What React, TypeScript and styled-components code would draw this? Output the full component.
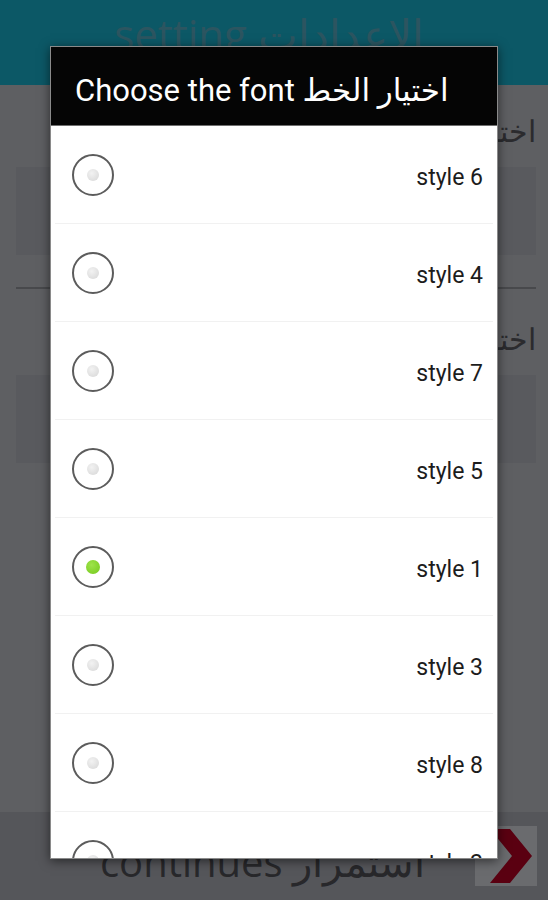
import React from 'react';
import styled, { createGlobalStyle } from 'styled-components';

const GlobalStyle = createGlobalStyle`
  html, body {
    margin: 0;
    padding: 0;
    background: #5e5f62;
  }
  body {
    font-family: Roboto, "Noto Sans", "DejaVu Sans", sans-serif;
  }
`;

const fonts = ['style 6', 'style 4', 'style 7', 'style 5', 'style 1', 'style 3', 'style 8', 'style 2'];
const selectedFont = 'style 1';

const App: React.FC = () => {
  return (
    <>
      <GlobalStyle />
      <Screen>
        <TopBar>
          <ScreenTitle>setting الإعدادات</ScreenTitle>
        </TopBar>

        <Content>
          <SectionLabel>اختر الخط</SectionLabel>
          <Field />
          <Divider />
          <SectionLabel>اختر الحجم</SectionLabel>
          <Field />
        </Content>

        <BottomBar>
          <ContinueText>continues استمرار</ContinueText>
          <NextButton>
            <svg width="56" height="58" viewBox="0 0 56 58">
              <path d="M12 2 L32 2 L54 29 L32 56 L12 56 L34 29 Z" fill="#5a0011" />
            </svg>
          </NextButton>
        </BottomBar>

        <Dialog>
          <DialogHeader>
            <DialogTitle>Choose the font اختيار الخط</DialogTitle>
          </DialogHeader>
          <OptionList>
            {fonts.map((font) => (
              <OptionRow key={font}>
                <Radio>
                  <RadioDot $checked={font === selectedFont} />
                </Radio>
                <OptionLabel>{font}</OptionLabel>
              </OptionRow>
            ))}
          </OptionList>
        </Dialog>
      </Screen>
    </>
  );
};

export default App;

const Screen = styled.div`
  position: relative;
  width: 548px;
  height: 900px;
  overflow: hidden;
  display: flex;
  flex-direction: column;
  background: #5e5f62;
`;

const TopBar = styled.div`
  height: 85px;
  background: #0c5866;
  display: flex;
  justify-content: center;
  align-items: flex-end;
  overflow: hidden;
`;

const ScreenTitle = styled.div`
  font-family: "Open Sans", "Noto Sans", sans-serif;
  font-size: 42px;
  line-height: 1;
  color: #2c5560;
  margin-bottom: 30px;
  margin-left: -10px;
`;

const Content = styled.div`
  flex: 1;
  display: flex;
  flex-direction: column;
  padding: 26px 12px 0 16px;
`;

const SectionLabel = styled.div`
  font-family: "Open Sans", "Noto Sans", sans-serif;
  font-size: 30px;
  line-height: 40px;
  color: #2b2b2e;
  direction: rtl;
  text-align: right;
  white-space: nowrap;
`;

const Field = styled.div`
  height: 88px;
  margin-top: 16px;
  background: #595a5e;
`;

const Divider = styled.div`
  height: 2px;
  margin: 32px 0 30px;
  background: #48494c;
`;

const BottomBar = styled.div`
  height: 88px;
  background: #55565a;
  display: flex;
  align-items: center;
  justify-content: flex-end;
  padding-right: 11px;
  gap: 50px;
`;

const ContinueText = styled.div`
  font-family: "Open Sans", "Noto Sans", sans-serif;
  font-size: 40px;
  line-height: 1;
  color: #28282b;
  margin-top: 12px;
`;

const NextButton = styled.div`
  width: 62px;
  height: 60px;
  background: #6a6b6e;
  display: flex;
  align-items: center;
  justify-content: center;
`;

const Dialog = styled.div`
  position: absolute;
  left: 50px;
  top: 46px;
  width: 446px;
  height: 811px;
  display: flex;
  flex-direction: column;
  background: #ffffff;
  border: 1px solid #8a8a8a;
  box-shadow: 0 2px 10px rgba(0, 0, 0, 0.55);
  overflow: hidden;
`;

const DialogHeader = styled.div`
  height: 78px;
  flex: none;
  background: #050505;
  display: flex;
  align-items: center;
  padding-left: 24px;
  border-bottom: 1px solid #6f6f6f;
`;

const DialogTitle = styled.div`
  font-size: 31px;
  color: #ffffff;
  white-space: nowrap;
  margin-top: 8px;
`;

const OptionList = styled.div`
  flex: 1;
  overflow: hidden;
`;

const OptionRow = styled.div`
  height: 97px;
  display: flex;
  align-items: center;
  justify-content: space-between;
  padding: 0 10px 0 17px;
  border-bottom: 1px solid #f1f1f1;
  margin: 0 4px;
`;

const Radio = styled.div`
  width: 42px;
  height: 42px;
  border-radius: 50%;
  border: 2px solid #5c5c5c;
  display: flex;
  align-items: center;
  justify-content: center;
  box-sizing: border-box;
`;

const RadioDot = styled.div<{ $checked: boolean }>`
  width: ${(p) => (p.$checked ? '14px' : '12px')};
  height: ${(p) => (p.$checked ? '14px' : '12px')};
  border-radius: 50%;
  background: ${(p) =>
    p.$checked
      ? 'radial-gradient(circle at 40% 35%, #9ee34a, #74c91c)'
      : 'radial-gradient(circle at 40% 35%, #f2f2f2, #d6d6d6)'};
`;

const OptionLabel = styled.div`
  font-size: 23px;
  color: #1c1c1c;
  margin-top: 6px;
`;
